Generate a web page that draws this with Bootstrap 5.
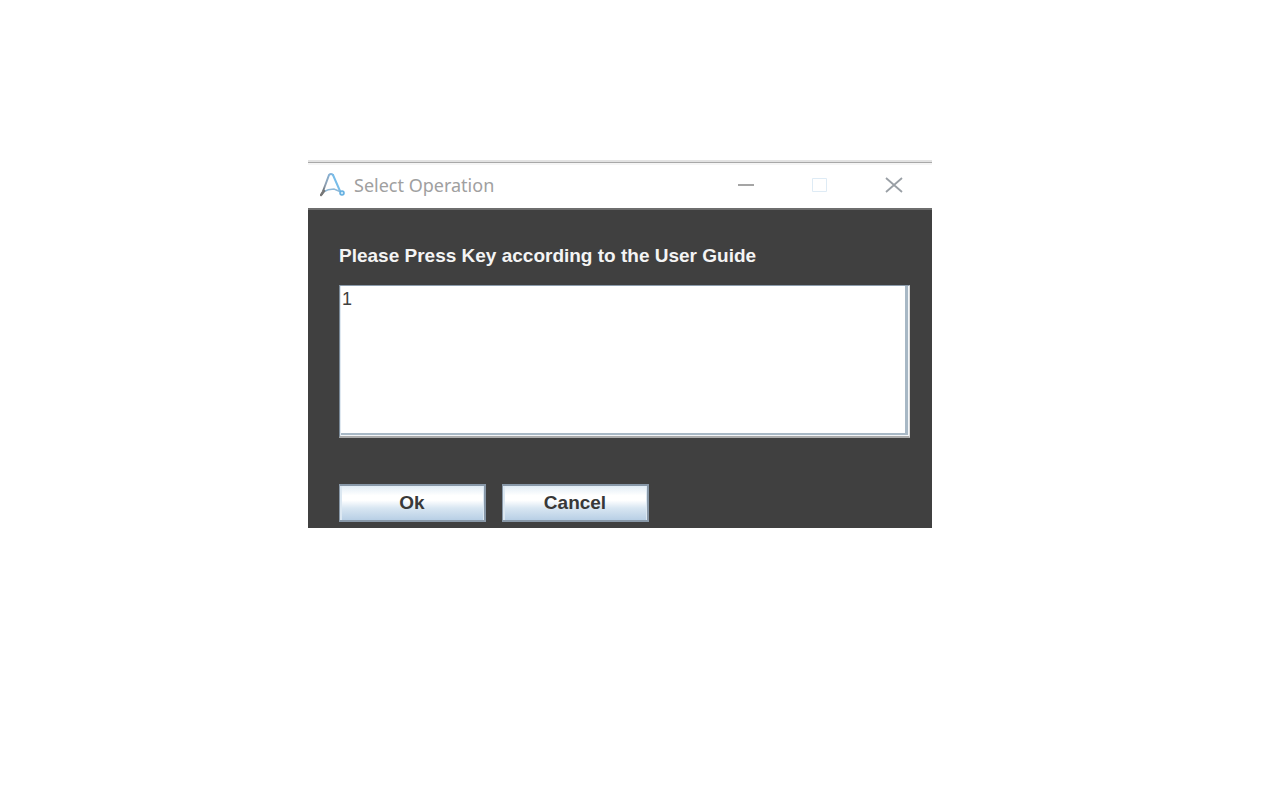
<!DOCTYPE html>
<html lang="en">
<head>
<meta charset="utf-8">
<meta name="viewport" content="width=device-width, initial-scale=1">
<title>Select Operation</title>
<link href="https://cdn.jsdelivr.net/npm/bootstrap@5.3.0/dist/css/bootstrap.min.css" rel="stylesheet">
<style>
  body { background: #fff; font-family: "Liberation Sans", Arial, sans-serif; }
  .stage { padding: 160px 40px 0 0; }
  .dialog-window { width: 100%; max-width: 624px; }
  .title-bar { height: 50px; padding: 0 12px; border-top: 2px solid #e2e2e2; border-bottom: 2px solid #6e6e6e; box-shadow: inset 0 1px #a8a8a8, inset 0 3px #f5f5f5; }
  .title-text { font: 18px/24px "Noto Sans", "Open Sans", sans-serif; color: #a0a0a0; }
  .caption-btn { width: 26px; height: 24px; }
  .window-controls { gap: 48px; padding-right: 13px; }
  .client { background: #404040; padding: 34px 22px 6px 31px; }
  .prompt { font-size: 19px; font-weight: 700; line-height: 24px; color: #f4f4f4; margin-bottom: 17px; }
  .entry { height: 153px; padding: 2px; resize: none; font-size: 18px; line-height: 22px; color: #404040; background: #fff; border: 1px solid; border-color: #8c9cac #d8d8d8 #aaa #7a8a99; border-bottom-width: 2px; border-radius: 0; outline: 0; box-shadow: inset 1px 0 #dfe8f0, inset -1px -1px #f4f6f8, inset -4px -3px #a8b8c5; }
  .metal-btn { width: 147px; height: 38px; padding: 0; font-size: 19px; line-height: 24px; font-weight: 700; color: #383838; border: 2px solid #8898a8; border-left-width: 1px; border-radius: 0; background: linear-gradient(#e2edf6 0, #fff 28%, #fff 42%, #d8e6f2 65%, #b8cfe5 100%); box-shadow: inset 2px 0 #dce8f2, inset -1px 0 #dce8f2; }
  .button-row { gap: 16px; margin-top: 46px; }
</style>
</head>
<body>
<main class="stage">
  <section class="dialog-window mx-auto" role="dialog" aria-labelledby="dialogTitle">
    <header class="title-bar d-flex align-items-center">
      <svg width="26" height="26" viewBox="0 0 26 26" fill="none" stroke-linecap="round" aria-hidden="true">
        <defs><linearGradient id="leg" x1="0" y1="1" x2="1" y2="0"><stop offset="0" stop-color="#555"/><stop offset=".35" stop-color="#8e9dae"/><stop offset="1" stop-color="#83b8e2"/></linearGradient></defs>
        <path d="M2 22 9 3Q11 1 13 3" stroke="url(#leg)" stroke-width="2"/>
        <path d="M13 3 20 19" stroke="#78bde9" stroke-width="2"/>
        <path d="M3 20Q8 17 14 17L21 20" stroke="#8fb9d8" stroke-width="1.5"/>
        <path d="M1 23 4 19" stroke="#777" stroke-width="2.5"/>
        <circle cx="22" cy="21" r="2" fill="#c9e6f8" stroke="#62aee0" stroke-width="1.5"/>
      </svg>
      <h1 id="dialogTitle" class="title-text mb-0 ms-2">Select Operation</h1>
      <div class="window-controls d-flex ms-auto">
        <button type="button" class="caption-btn btn border-0 p-0 d-flex align-items-center justify-content-center" aria-label="Minimize"><svg width="18" height="18"><path d="M1 9H17" stroke="#a5a5a5" stroke-width="2"/></svg></button>
        <button type="button" class="caption-btn btn border-0 p-0 d-flex align-items-center justify-content-center" aria-label="Maximize"><svg width="18" height="18" fill="none"><path d="M1.5 2.5H15.5V15.5H1.5Z" stroke="#deebf5"/></svg></button>
        <button type="button" class="caption-btn btn border-0 p-0 d-flex align-items-center justify-content-center" aria-label="Close"><svg width="18" height="18"><path d="M1 2 17 16M17 2 1 16" stroke="#999fa5" stroke-width="1.8"/></svg></button>
      </div>
    </header>
    <form class="client">
      <label for="keyEntry" class="prompt d-block">Please Press Key according to the User Guide</label>
      <textarea id="keyEntry" class="entry d-block w-100">1</textarea>
      <div class="button-row d-flex">
        <button type="button" class="metal-btn btn">Ok</button>
        <button type="button" class="metal-btn btn">Cancel</button>
      </div>
    </form>
  </section>
</main>
<script src="https://cdn.jsdelivr.net/npm/bootstrap@5.3.0/dist/js/bootstrap.bundle.min.js"></script>
</body>
</html>
